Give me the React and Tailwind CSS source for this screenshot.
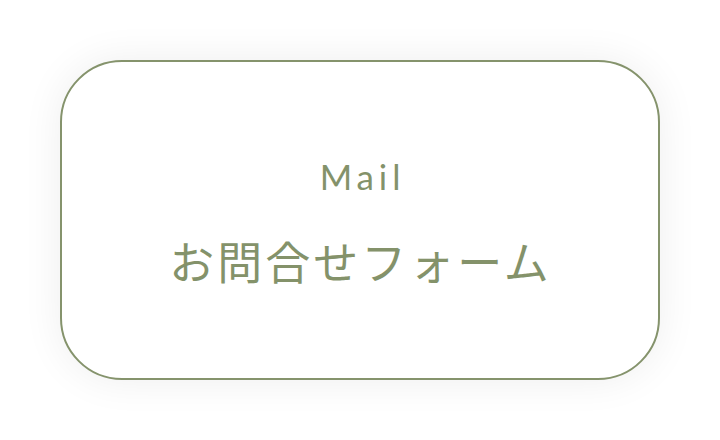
export default function App() {
  return (
    <div className="w-[720px] h-[440px] bg-white flex items-center justify-center">
      <div className="w-[600px] h-[320px] rounded-[62px] border-2 border-[#85936c] bg-white shadow-[0_0_40px_rgba(0,0,0,0.07)] flex flex-col items-center justify-center gap-[44px] pt-[2px]">
        <div
          className="text-[35px] leading-none tracking-[0.14em] text-[#84926a] pl-[5px]"
          style={{ fontFamily: 'Lato, "Noto Sans", sans-serif' }}
        >
          Mail
        </div>
        <div
          className="text-[45px] leading-none tracking-[3px] text-[#84926a] pl-[1px]"
          style={{ fontFamily: '"Noto Sans CJK JP", sans-serif' }}
        >
          お問合せフォーム
        </div>
      </div>
    </div>
  );
}
